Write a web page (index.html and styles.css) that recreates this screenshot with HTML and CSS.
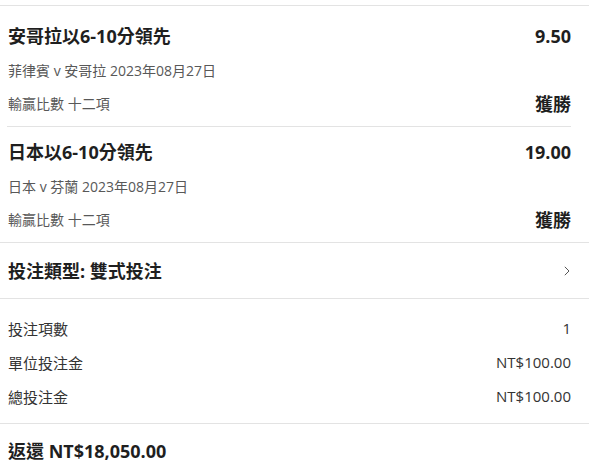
FILE: index.html
```html
<!DOCTYPE html>
<html lang="zh-Hant">
<head>
<meta charset="utf-8">
<link rel="stylesheet" href="styles.css">
</head>
<body>
<div class="slip">
  <div class="legs">
    <div class="leg">
      <div class="line">
        <span class="title">安哥拉以6-10分領先</span>
        <span class="odds">9.50</span>
      </div>
      <div class="sub">菲律賓 v 安哥拉 2023年08月27日</div>
      <div class="line result">
        <span class="market">輸贏比數 十二項</span>
        <span class="outcome">獲勝</span>
      </div>
    </div>
    <div class="leg">
      <div class="line">
        <span class="title">日本以6-10分領先</span>
        <span class="odds">19.00</span>
      </div>
      <div class="sub">日本 v 芬蘭 2023年08月27日</div>
      <div class="line result">
        <span class="market">輸贏比數 十二項</span>
        <span class="outcome">獲勝</span>
      </div>
    </div>
  </div>
  <div class="bettype">
    <span class="title">投注類型: 雙式投注</span>
    <svg class="chev" width="6" height="10" viewBox="0 0 6 10"><path d="M0.8 0.8 L5 5 L0.8 9.2" fill="none" stroke="#555" stroke-width="1"/></svg>
  </div>
  <div class="summary">
    <div class="srow"><span>投注項數</span><span>1</span></div>
    <div class="srow"><span>單位投注金</span><span>NT$100.00</span></div>
    <div class="srow"><span>總投注金</span><span>NT$100.00</span></div>
  </div>
  <div class="ret">
    <span class="title">返還 NT$18,050.00</span>
  </div>
</div>
</body>
</html>
```
FILE: styles.css
```css
html, body {
  margin: 0;
  padding: 0;
  background: #ffffff;
}
body {
  font-family: "Open Sans", "Noto Sans CJK TC", sans-serif;
  color: #1f1f1f;
}
.slip {
  padding-top: 5px;
}
.legs {
  border-top: 1px solid #e3e3e3;
  border-bottom: 1px solid #e3e3e3;
  padding: 5px 18px 0 7px;
}
.leg {
  padding: 13px 0 10px 1px;
  border-bottom: 1px solid #e3e3e3;
}
.leg:last-child {
  border-bottom: none;
}
.line {
  display: flex;
  justify-content: space-between;
  align-items: center;
  height: 24px;
}
.title {
  font-size: 18px;
  font-weight: 700;
  line-height: 24px;
  color: #1f1f1f;
}
.odds, .outcome {
  font-size: 18px;
  font-weight: 700;
  line-height: 24px;
  color: #1f1f1f;
}
.sub {
  font-size: 14px;
  line-height: 20px;
  color: #585858;
  margin-top: 13px;
}
.result {
  margin-top: 11px;
}
.market {
  font-size: 14px;
  line-height: 20px;
  color: #585858;
}
.bettype {
  display: flex;
  justify-content: space-between;
  align-items: center;
  height: 55px;
  padding: 0 19px 0 8px;
  border-bottom: 1px solid #e3e3e3;
}
.summary {
  padding: 12px 18px 10px 8px;
  border-bottom: 1px solid #e3e3e3;
}
.srow {
  display: flex;
  justify-content: space-between;
  align-items: center;
  height: 34px;
  font-size: 15px;
  color: #333333;
}
.ret {
  padding: 15px 18px 0 8px;
}
```
